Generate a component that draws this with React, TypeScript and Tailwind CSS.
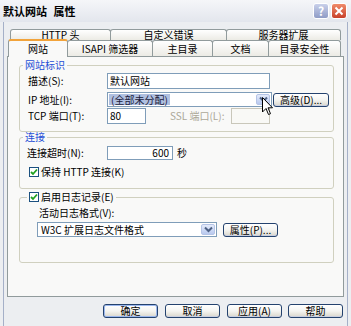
import React from "react";

const FONT = "font-['Noto_Sans_CJK_SC',sans-serif]";

function Chevron() {
  return (
    <svg width="9" height="7" viewBox="0 0 9 7">
      <path d="M1 1.5 L4.5 5 L8 1.5" fill="none" stroke="#4d6185" strokeWidth="2" />
    </svg>
  );
}

function DropBtn() {
  return (
    <div className="h-full w-[14px] rounded-[2px] border border-[#b5c4e6] bg-gradient-to-b from-[#e4ebfb] to-[#b9c9ee] flex items-center justify-center">
      <Chevron />
    </div>
  );
}

function Btn({ className, children, def }: { className?: string; children: React.ReactNode; def?: boolean }) {
  return (
    <div
      className={
        "h-[14px] w-[55px] rounded-[3px] border border-[#24426e] bg-gradient-to-b from-white via-[#f4f4f1] to-[#d9d6cc] flex items-center justify-center text-[10px] leading-none text-black whitespace-nowrap " +
        (def ? "shadow-[inset_0_0_0_1px_#9bb7ee] " : "shadow-[inset_0_-1px_0_#c9cfe0] ") +
        (className ?? "")
      }
    >
      {children}
    </div>
  );
}

function Check() {
  return (
    <div className="w-[10px] h-[10px] border border-[#1c5180] bg-white flex items-center justify-center shrink-0">
      <svg width="8" height="8" viewBox="0 0 8 8">
        <path d="M1 4 L3 6 L7 1.5" fill="none" stroke="#21a121" strokeWidth="1.8" />
      </svg>
    </div>
  );
}

export default function App() {
  return (
    <div className={"relative w-[351px] h-[326px] overflow-hidden bg-[#eceef1] text-black whitespace-nowrap " + FONT}>
      {/* Title bar */}
      <div className="h-[22px] flex items-center pl-[3px] pr-[4px] bg-gradient-to-b from-[#f5f6f9] to-[#e3e6ed]">
        <div className="text-[11px] leading-none font-bold [word-spacing:4px]">默认网站 属性</div>
        <div className="ml-auto flex items-center gap-[2px]">
          <div className="w-[16px] h-[16px] rounded-[3px] border border-white bg-gradient-to-b from-[#c9d0ea] to-[#8f9cc6] flex items-center justify-center text-white text-[12px] font-bold leading-none">
            ?
          </div>
          <div className="w-[16px] h-[16px] rounded-[3px] border border-white bg-gradient-to-b from-[#ef8a6a] to-[#c8402a] flex items-center justify-center">
            <svg width="10" height="10" viewBox="0 0 10 10">
              <path d="M1.5 1.5 L8.5 8.5 M8.5 1.5 L1.5 8.5" stroke="white" strokeWidth="2" />
            </svg>
          </div>
        </div>
      </div>

      {/* Frame */}
      <div className="ml-[3px] w-[345px] h-[304px] border-x border-[#a5b0c8] pt-[7px]">
        {/* back tab row */}
        <div className="flex ml-[6px] h-[11px]">
          <div className="w-[101px] h-[11px] border border-b-0 border-[#919b9c] rounded-t-[3px] bg-gradient-to-b from-white to-[#ecebe5] flex items-center justify-center text-[10px] leading-none">HTTP 头</div>
          <div className="-ml-px w-[117px] h-[11px] border border-b-0 border-[#919b9c] rounded-t-[3px] bg-gradient-to-b from-white to-[#ecebe5] flex items-center justify-center text-[10px] leading-none">自定义错误</div>
          <div className="-ml-px w-[115px] h-[11px] border border-b-0 border-[#919b9c] rounded-t-[3px] bg-gradient-to-b from-white to-[#ecebe5] flex items-center justify-center text-[10px] leading-none">服务器扩展</div>
        </div>
        {/* front tab row */}
        <div className="flex items-end ml-[4px] h-[16px]">
          <div className="relative z-10 -mb-px w-[60px] h-[18px] border-x border-[#919b9c] border-t-2 border-t-[#f2a33a] rounded-t-[3px] bg-[#f9f9f8] flex items-center justify-center text-[10px] leading-none">网站</div>
          <div className="-ml-px w-[86px] h-[16px] border border-b-0 border-[#919b9c] rounded-t-[3px] bg-gradient-to-b from-white to-[#ecebe5] flex items-center justify-center text-[10px] leading-none">ISAPI 筛选器</div>
          <div className="-ml-px w-[61px] h-[16px] border border-b-0 border-[#919b9c] rounded-t-[3px] bg-gradient-to-b from-white to-[#ecebe5] flex items-center justify-center text-[10px] leading-none">主目录</div>
          <div className="-ml-px w-[57px] h-[16px] border border-b-0 border-[#919b9c] rounded-t-[3px] bg-gradient-to-b from-white to-[#ecebe5] flex items-center justify-center text-[10px] leading-none">文档</div>
          <div className="-ml-px w-[73px] h-[16px] border border-b-0 border-[#919b9c] rounded-t-[3px] bg-gradient-to-b from-white to-[#ecebe5] flex items-center justify-center text-[10px] leading-none">目录安全性</div>
        </div>

        {/* Panel */}
        <div className="ml-[3px] w-[337px] h-[241px] border border-[#919b9c] bg-[#f9f9f8] flex flex-col">
          {/* Group 1 */}
          <fieldset className="mt-[3px] ml-[11px] w-[315px] border border-[#d0d0bf] rounded-[3px] pb-[7px]">
            <legend className="ml-[3px] px-[2px] text-[10px] leading-[10px] h-[10px] text-[#1f4fd6]">网站标识</legend>
            <div className="mt-[3px] h-[16px] flex items-center">
              <div className="w-[87px] pl-[8px] text-[10px] leading-none">描述(S):</div>
              <div className="w-[163px] h-[16px] border border-[#7f9db9] bg-white flex items-center pl-[2px] text-[10px] leading-none">默认网站</div>
            </div>
            <div className="mt-[3px] h-[15px] flex items-center">
              <div className="w-[87px] pl-[8px] text-[10px] leading-none">IP 地址(I):</div>
              <div className="w-[165px] h-[15px] border border-[#7f9db9] bg-white flex items-center p-px">
                <div className="h-full bg-[#b0c0e0] text-[#1b1b3a] flex items-center px-[2px] text-[10px] leading-none shrink-0">(全部未分配)</div>
                <div className="ml-auto h-full">
                  <DropBtn />
                </div>
              </div>
              <Btn className="ml-[1px] w-[56px]">高级(D)...</Btn>
            </div>
            <div className="mt-[1px] h-[16px] flex items-center">
              <div className="w-[87px] pl-[8px] text-[10px] leading-none">TCP 端口(T):</div>
              <div className="w-[39px] h-[16px] border border-[#7f9db9] bg-white flex items-center pl-[2px] text-[10px] leading-none">80</div>
              <div className="ml-[24px] w-[61px] text-[10px] leading-none text-[#aca899]">SSL 端口(L):</div>
              <div className="w-[39px] h-[16px] border border-[#c9c7ba] bg-[#f9f9f6]" />
            </div>
          </fieldset>

          {/* Group 2 */}
          <fieldset className="ml-[11px] w-[315px] border border-[#d0d0bf] rounded-[3px] pb-[10px]">
            <legend className="ml-[3px] px-[2px] text-[10px] leading-[10px] h-[10px] text-[#1f4fd6]">连接</legend>
            <div className="mt-[4px] h-[14px] flex items-center">
              <div className="w-[87px] pl-[7px] text-[10px] leading-none">连接超时(N):</div>
              <div className="w-[66px] h-[14px] border border-[#7f9db9] bg-white flex items-center justify-end pr-[3px] text-[10px] leading-none">600</div>
              <div className="ml-[4px] text-[10px] leading-none">秒</div>
            </div>
            <div className="mt-[6px] h-[12px] flex items-center pl-[9px]">
              <Check />
              <div className="ml-[2px] text-[10px] leading-none">保持 HTTP 连接(K)</div>
            </div>
          </fieldset>

          {/* Group 3 */}
          <fieldset className="mt-[3px] ml-[11px] w-[315px] border border-[#d0d0bf] rounded-[3px] pb-[25px]">
            <legend className="ml-[7px] px-[2px] h-[10px] flex items-center">
              <Check />
              <span className="ml-[2px] text-[10px] leading-[10px]">启用日志记录(E)</span>
            </legend>
            <div className="mt-[5px] h-[12px] flex items-center pl-[19px] text-[10px] leading-none">活动日志格式(V):</div>
            <div className="mt-[3px] h-[15px] flex items-center pl-[17px]">
              <div className="w-[180px] h-[15px] border border-[#7f9db9] bg-white flex items-center p-px">
                <div className="pl-[2px] text-[10px] leading-none">W3C 扩展日志文件格式</div>
                <div className="ml-auto h-full">
                  <DropBtn />
                </div>
              </div>
              <Btn className="ml-[6px]">属性(P)...</Btn>
            </div>
          </fieldset>
        </div>

        {/* Bottom buttons */}
        <div className="mt-[7px] flex">
          <Btn className="ml-[99px]" def>确定</Btn>
          <Btn className="ml-[7px]">取消</Btn>
          <Btn className="ml-[7px]">应用(A)</Btn>
          <Btn className="ml-[6px]">帮助</Btn>
        </div>
      </div>

      {/* Mouse cursor */}
      <svg className="absolute left-[262px] top-[97px]" width="12" height="19" viewBox="0 0 12 19">
        <path d="M0.5 0.5 L0.5 15 L4 11.5 L6.5 17.5 L8.5 16.7 L6 10.8 L10.5 10.8 Z" fill="white" stroke="black" strokeWidth="1" />
      </svg>
    </div>
  );
}
